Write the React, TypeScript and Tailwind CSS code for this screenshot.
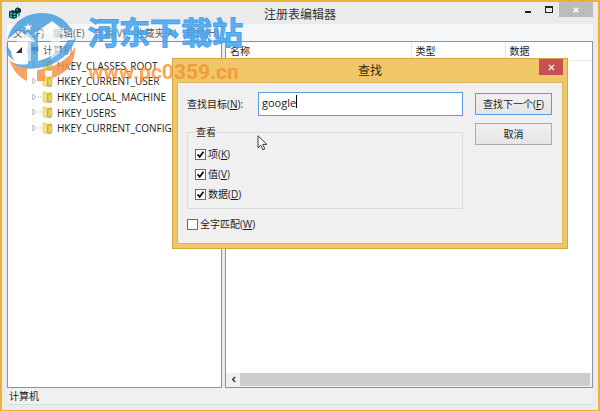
import { useState } from 'react';

const menus = ['文件(F)', '编辑(E)', '查看(V)', '收藏夹(A)', '帮助(H)'];

const keys = [
  'HKEY_CLASSES_ROOT',
  'HKEY_CURRENT_USER',
  'HKEY_LOCAL_MACHINE',
  'HKEY_USERS',
  'HKEY_CURRENT_CONFIG',
];

const scopes = [
  { id: 'keys', label: '项', hotkey: 'K' },
  { id: 'values', label: '值', hotkey: 'V' },
  { id: 'data', label: '数据', hotkey: 'D' },
];

function RegistryIcon() {
  return (
    <svg viewBox="0 0 12 12" className="h-3 w-3" aria-hidden="true">
      <path d="M0 4.500 3.500 3 8 4.500v6L5 12 0 10.500z" fill="#0a3f42" />
      <path d="M1 5.500h2v2H1zM4.500 6h2v2h-2zM1 8.500h2V10H1zM4.500 9h2v1.500h-2z" fill="#37c6c4" />
      <path d="M6 2 8.500.3 12 2v3L9 7 6 5z" fill="#082f33" />
      <path d="M7.500 2H9v1.500H7.500zM9 6h2v2.500L9 10z" fill="#25a5a5" />
    </svg>
  );
}

function ComputerIcon() {
  return (
    <svg viewBox="0 0 12 10" className="h-[10px] w-3 shrink-0" aria-hidden="true">
      <path d="M0 2h3v7H0z" fill="#c4ccd6" />
      <path d="M3.500 1H12v6H3.500z" fill="#cfd6ea" />
      <path d="M4.500 2H11v4H4.500z" fill="#3a4fc4" />
      <path d="M6 7h3v1.500h1.500V9H5v-.5h1z" fill="#9aa5b5" />
    </svg>
  );
}

function FolderIcon() {
  return (
    <svg viewBox="0 0 11 12" className="h-3 w-[11px] shrink-0" aria-hidden="true">
      <path d="M4 2.500 9.500 1v9.500L4 11z" fill="#dcb83f" />
      <path d="M1 .8 5 1.600V12L1 10.500z" fill="#f6e482" stroke="#d2b03c" strokeWidth=".5" />
      <path d="M6 3.500 10 3v7.500L6 12z" fill="#eed35a" stroke="#bd9a30" strokeWidth=".5" />
      <path d="M7 9.500h2V12H7z" fill="#9fb7c4" />
    </svg>
  );
}

function Pointer() {
  return (
    <svg viewBox="0 0 12 16" className="absolute left-[79px] top-[52px] h-4 w-3" aria-hidden="true">
      <path
        d="M1 .8v12l2.800-2.600 2 4.600 2-.9-2-4.500h4z"
        fill="#fff"
        stroke="#3c3c44"
        strokeWidth="1"
      />
    </svg>
  );
}

function Tick({ id, checked, onChange }: { id: string; checked: boolean; onChange: () => void }) {
  return (
    <span className="grid h-[11px] w-[11px] shrink-0">
      <input
        id={id}
        type="checkbox"
        checked={checked}
        onChange={onChange}
        className="col-start-1 row-start-1 h-[11px] w-[11px] appearance-none border border-[#6c6c6c] bg-white"
      />
      {checked && (
        <svg viewBox="0 0 11 11" className="pointer-events-none col-start-1 row-start-1 h-[11px] w-[11px]" aria-hidden="true">
          <path d="M2.600 5.400 4.700 7.800 8.500 2.800" fill="none" stroke="#111" strokeWidth="1.800" />
        </svg>
      )}
    </span>
  );
}

function FindDialog() {
  const [target, setTarget] = useState('google');
  const [checked, setChecked] = useState<Record<string, boolean>>({ keys: true, values: true, data: true });

  const toggle = (id: string) => setChecked((prev) => ({ ...prev, [id]: !prev[id] }));

  return (
    <div
      role="dialog"
      aria-label="查找"
      className="absolute left-[170px] top-[56px] w-[396px] border border-[#d3a742] bg-[#efc767] px-1 pb-1"
    >
      <div className="relative flex h-[23px] items-center justify-center text-xs text-[#33290f]">
        查找
        <button aria-label="关闭" className="absolute right-0 top-0 flex h-4 w-6 items-center justify-center bg-[#c75050]">
          <svg viewBox="0 0 8 8" className="h-[7px] w-[7px]">
            <path d="M1 1l6 6M7 1 1 7" stroke="#fff" strokeWidth="1.600" />
          </svg>
        </button>
      </div>

      <div className="relative flex gap-3 border border-[#d8b566] bg-[#f0f0f0] pb-[11px] pl-[9px] pr-[10px] pt-[9px]">
        <div className="flex-1">
          <div className="flex items-center">
            <label htmlFor="target" className="w-[71px]">
              查找目标(<u>N</u>):
            </label>
            <div className="flex h-6 flex-1 items-start border border-[#569de5] bg-white pl-[3px] pt-[2px]">
              <input
                id="target"
                value={target}
                onChange={(e) => setTarget(e.target.value)}
                className="field-sizing-content h-[15px] text-[11px] leading-[15px] outline-none"
              />
              <span className="h-[13px] w-px bg-black" />
            </div>
          </div>

          <fieldset className="mt-2 border border-[#dcdcdc] pb-[6px] pl-[7px]">
            <legend className="px-px leading-4">查看</legend>
            <div className="flex flex-col gap-1 pt-[6px]">
              {scopes.map((scope) => (
                <div key={scope.id} className="flex h-4 items-center gap-[2px]">
                  <Tick id={scope.id} checked={!!checked[scope.id]} onChange={() => toggle(scope.id)} />
                  <label htmlFor={scope.id}>
                    {scope.label}(<u>{scope.hotkey}</u>)
                  </label>
                </div>
              ))}
            </div>
          </fieldset>

          <div className="mt-[7px] flex h-4 items-center gap-[2px]">
            <Tick id="whole" checked={!!checked.whole} onChange={() => toggle('whole')} />
            <label htmlFor="whole">
              全字匹配(<u>W</u>)
            </label>
          </div>
        </div>

        <div className="flex w-[77px] flex-col gap-2 pt-px">
          <button className="h-[22px] border border-[#569de5] bg-linear-to-b from-[#f0f0f0] to-[#e5e5e5]">
            查找下一个(<u>F</u>)
          </button>
          <button className="h-[22px] border border-[#acacac] bg-linear-to-b from-[#f0f0f0] to-[#e5e5e5]">取消</button>
        </div>

        <Pointer />
      </div>
    </div>
  );
}

function Watermark() {
  return (
    <div className="pointer-events-none absolute left-1 top-[10px] flex items-start">
      <svg viewBox="0 0 70 70" className="h-[70px] w-[70px]" aria-hidden="true">
        {/* dome and lower swoosh */}
        <path
          d="M1 42C-2 18 14 1 36 1c14 0 25 7 30 18-4-2-8-3-11-3L46 9 27 22v7l-5-4-9-7-11 9c-2 5 0 9 3 12 0 4 2 8 4 10-3-2-6-4-8-7z"
          fill="#4a9dde"
          opacity=".85"
        />
        <path
          d="M22 30h5v-6l5-4v29c14-4 25-11 30-21 3 0 6 0 8-2-5 16-19 27-37 30-12 2-22 0-27-6 6 3 11 3 16 2z"
          fill="#4a9dde"
          opacity=".8"
        />
        <path d="M33 22 47 10l13 12h-6v19l-9 6V22zM10 30l12-10 8 10h-5v19h-8V30z" fill="#fff" opacity=".6" />
        <path d="m22 11 1 3 3-1-2 3 1 3-3-2-3 2 1-3-2-2h3z" fill="#fff" />
        <path d="M3 47c6 7 13 9 18 9v13C13 66 6 57 3 47z" fill="#f3944a" opacity=".85" />
        <path d="M31 58c18-2 32-11 38-23 1 16-9 27-23 31V56l-7 2v11h-8z" fill="#f3944a" opacity=".85" />
      </svg>
      <div className="pl-3">
        <div className="h-[48px] text-[31px] font-bold leading-10 text-[#45a3ee]/85 [-webkit-text-stroke:1px_#45a3ee]">
          河东下载站
        </div>
        <div className="font-[Roboto,sans-serif] text-[21px] font-bold leading-6 text-[#f59131]/80">
          www.pc0359.cn
        </div>
      </div>
    </div>
  );
}

export default function App() {
  return (
    <div className="relative flex min-h-screen flex-col border-2 border-b border-[#ecb13c] bg-[#ebebeb] px-[5px] pb-[5px] font-['Open_Sans','Noto_Sans_CJK_SC',sans-serif] text-[10px] leading-4 text-[#1c1c1c]">
      <header className="relative flex h-[22px] items-end justify-center pb-px text-xs text-[#333]">
        <span className="absolute left-[2px] top-[5px]">
          <RegistryIcon />
        </span>
        注册表编辑器
        <div className="absolute right-0 top-0 flex h-[15px]">
          <button aria-label="最小化" className="flex w-[21px] items-center justify-center">
            <span className="mt-1 h-[2px] w-[6px] bg-[#222]" />
          </button>
          <button aria-label="最大化" className="flex w-[21px] items-center justify-center">
            <span className="h-[7px] w-2 border border-t-2 border-[#222]" />
          </button>
          <button aria-label="关闭" className="flex w-[34px] items-center justify-center bg-[#bcbcbc]">
            <svg viewBox="0 0 8 8" className="h-[6px] w-[6px]">
              <path d="M1 1l6 6M7 1 1 7" stroke="#fff" strokeWidth="2" />
            </svg>
          </button>
        </div>
      </header>

      <nav className="flex h-[17px] items-center gap-[9px] bg-[#f5f6f7] pl-[6px] text-[#666]">
        {menus.map((menu) => (
          <button key={menu}>{menu}</button>
        ))}
      </nav>

      <main className="flex flex-1 gap-[3px]">
        <div className="w-[215px] border border-[#8e9199] bg-white">
          <ul className="grid h-[94px] grid-rows-6">
            <li className="flex items-center pl-2 text-[#555]">
              <svg viewBox="0 0 6 6" className="mr-[5px] h-[6px] w-[6px]" aria-hidden="true">
                <path d="M6 0v6H0z" fill="#333" />
              </svg>
              <ComputerIcon />
              <span className="pl-1">计算机</span>
            </li>
            {keys.map((key) => (
              <li key={key} className="flex items-center pl-6">
                <svg viewBox="0 0 10 8" className="h-2 w-[10px] shrink-0" aria-hidden="true">
                  <path d="M.8 1v6l3-3z" fill="#fff" stroke="#a5a5a5" strokeWidth=".8" />
                  <path d="M6 4h1M8.500 4h1" stroke="#aaa" />
                </svg>
                <FolderIcon />
                <span className="pl-1">{key}</span>
              </li>
            ))}
          </ul>
        </div>

        <div className="flex flex-1 flex-col justify-between border border-[#8e9199] bg-white">
          <table className="w-full table-fixed border-b border-[#ececec] text-left">
            <thead>
              <tr className="h-[18px]">
                <th className="w-[185px] border-r border-[#e5e5e5] pl-1 font-normal">名称</th>
                <th className="w-[94px] border-r border-[#e5e5e5] pl-1 font-normal">类型</th>
                <th className="pl-1 font-normal">数据</th>
              </tr>
            </thead>
          </table>
          <div className="flex h-[14px] bg-[#f0f0f0] pb-px">
            <button aria-label="向左滚动" className="flex w-[14px] items-center justify-center">
              <svg viewBox="0 0 6 8" className="h-[7px] w-[5px]">
                <path d="M5 1 2 4l3 3" fill="none" stroke="#333" strokeWidth="1.600" />
              </svg>
            </button>
            <div className="mr-[2px] flex-1 bg-[#cdcdcd]" />
          </div>
        </div>
      </main>

      <footer className="h-[17px] border-b border-[#d9dde2] bg-[#f0f0f0] pl-[2px]">计算机</footer>

      <FindDialog />
      <Watermark />
    </div>
  );
}
